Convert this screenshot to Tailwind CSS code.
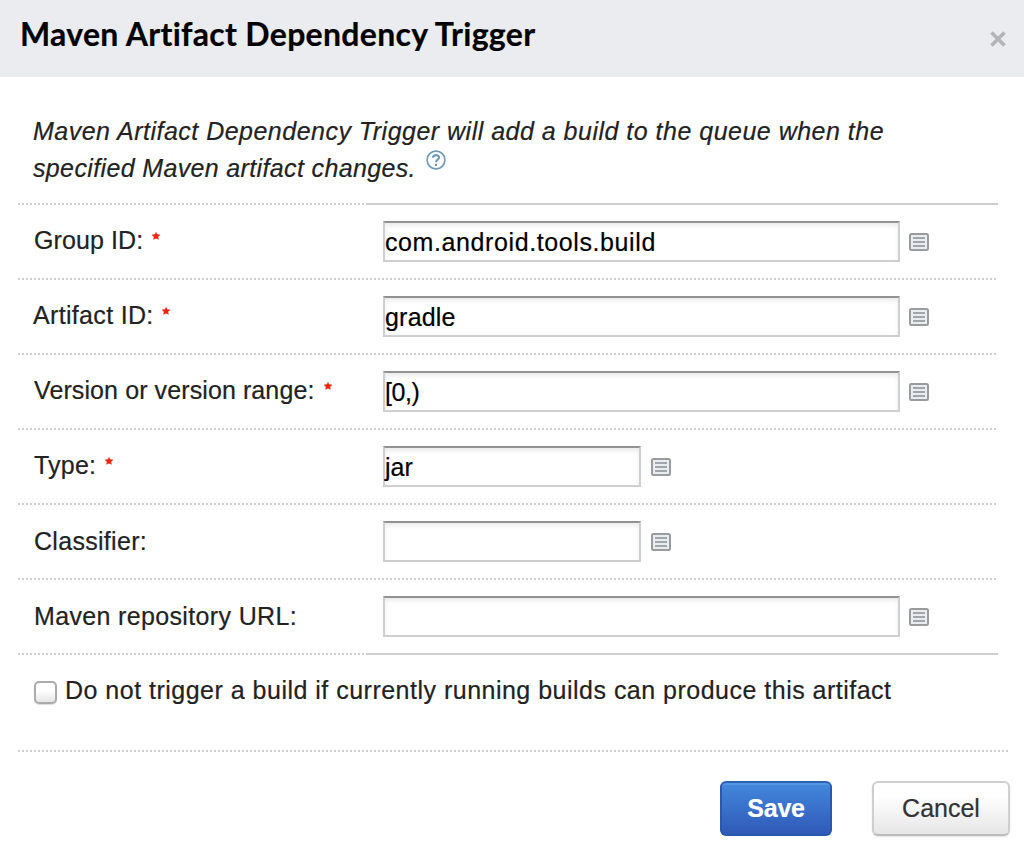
<!DOCTYPE html>
<html lang="en">
<head>
<meta charset="utf-8">
<title>Maven Artifact Dependency Trigger</title>
<script src="https://cdn.jsdelivr.net/npm/@tailwindcss/browser@4"></script>
</head>
<body class="w-[1024px] h-[868px] overflow-hidden bg-white text-[#222] font-['Liberation_Sans',Arial,sans-serif] text-[25px] leading-[37px] whitespace-nowrap [-webkit-text-stroke:0.2px]">
<svg class="hidden">
  <symbol id="list" viewBox="0 0 20 18">
    <rect x="1" y="1" width="18" height="16" rx="1.5" fill="#e9ecf0" stroke="#999b9c" stroke-width="2"/>
    <path d="M4 5h12M4 9h12M4 13h12" stroke="#a2a5a9" stroke-width="1.8"/>
  </symbol>
  <symbol id="star" viewBox="0 0 8 8">
    <path d="M4 .4L5.100 2.500L7.900 2.900L5.900 4.700L6.400 7.300L4 6.200L1.600 7.300L2.100 4.700L.1 2.900L2.900 2.500Z" fill="#f0260c" stroke="#f0260c" stroke-width=".5"/>
  </symbol>
</svg>
<header class="h-[77px] bg-[#ebecf0] flex items-start justify-between pl-[20px] pr-[18px]">
  <h1 class="pt-[15px] font-['Lato',sans-serif] font-bold text-[32px] leading-[37px] tracking-[0.3px] [font-variant-ligatures:none] text-black">Maven Artifact Dependency Trigger</h1>
  <svg class="mt-[31px] w-4 h-4" viewBox="0 0 16 16"><path d="M1.500 1.500l13 13M14.500 1.500l-13 13" stroke="#b5b4b4" stroke-width="3.600"/></svg>
</header>
<main class="pl-[18px]">
  <div class="h-[126px] pt-[36px] pl-[15px] italic">
    <p class="tracking-[0.49px]">Maven Artifact Dependency Trigger will add a build to the queue when the</p>
    <p class="flex items-start tracking-[0.36px]">specified Maven artifact changes.
      <svg class="w-5 h-5 ml-[10px]" viewBox="0 0 20 20" fill="none" stroke="#6f9ab8"><circle cx="10" cy="10" r="8.900" stroke-width="1.700"/><path d="M7 7.700C7.200 4.200 13 4.300 13 7.500C13 9.700 10 9.500 10 12.200M10 13.700v2.200" stroke-width="2.200"/></svg>
    </p>
  </div>
  <div class="w-[980px]">
    <div class="flex h-[75px]">
      <div class="w-[348px] pl-4 bg-[repeating-linear-gradient(90deg,#cfcfcf_0_2px,transparent_2px_4px)] bg-[length:100%_2px] bg-no-repeat pt-[19px] flex items-start tracking-[0.1px]">Group ID:<svg class="w-2 h-2 ml-[9px] mt-[10px]"><use href="#star"/></svg></div>
      <div class="w-[632px] pl-[17px] pt-4 flex items-start border-t-2 border-[#cfcfcf]">
        <div class="w-[517px] h-[41px] border-2 border-[#cfcfcf] border-t-[#929292] shadow-[inset_0_3px_4px_#ececec] text-black tracking-[0.6px] pt-px">com.android.tools.build</div>
        <svg class="w-5 h-[18px] ml-[9px] mt-[12px]"><use href="#list"/></svg>
      </div>
    </div>
    <div class="flex h-[75px] bg-[repeating-linear-gradient(90deg,#cfcfcf_0_2px,transparent_2px_4px)] bg-[length:100%_2px] bg-no-repeat">
      <div class="w-[348px] pl-[15px] pt-[19px] flex items-start tracking-[0.33px]">Artifact ID:<svg class="w-2 h-2 ml-[8px] mt-[10px]"><use href="#star"/></svg></div>
      <div class="pl-[17px] pt-[18px] flex items-start">
        <div class="w-[517px] h-[41px] border-2 border-[#cfcfcf] border-t-[#929292] shadow-[inset_0_3px_4px_#ececec] text-black tracking-[0.2px] pt-px">gradle</div>
        <svg class="w-5 h-[18px] ml-[9px] mt-[12px]"><use href="#list"/></svg>
      </div>
    </div>
    <div class="flex h-[75px] bg-[repeating-linear-gradient(90deg,#cfcfcf_0_2px,transparent_2px_4px)] bg-[length:100%_2px] bg-no-repeat">
      <div class="w-[348px] pl-4 pt-[19px] flex items-start tracking-[0.1px]">Version or version range:<svg class="w-2 h-2 ml-[10px] mt-[10px]"><use href="#star"/></svg></div>
      <div class="pl-[17px] pt-[18px] flex items-start">
        <div class="w-[517px] h-[41px] border-2 border-[#cfcfcf] border-t-[#929292] shadow-[inset_0_3px_4px_#ececec] text-black tracking-[-0.4px] pt-px">[0,)</div>
        <svg class="w-5 h-[18px] ml-[9px] mt-[12px]"><use href="#list"/></svg>
      </div>
    </div>
    <div class="flex h-[75px] bg-[repeating-linear-gradient(90deg,#cfcfcf_0_2px,transparent_2px_4px)] bg-[length:100%_2px] bg-no-repeat">
      <div class="w-[348px] pl-4 pt-[19px] flex items-start tracking-[0.2px]">Type:<svg class="w-2 h-2 ml-[9px] mt-[10px]"><use href="#star"/></svg></div>
      <div class="pl-[17px] pt-[18px] flex items-start">
        <div class="w-[258px] h-[41px] border-2 border-[#cfcfcf] border-t-[#929292] shadow-[inset_0_3px_4px_#ececec] text-black pt-px">jar</div>
        <svg class="w-5 h-[18px] ml-[10px] mt-[12px]"><use href="#list"/></svg>
      </div>
    </div>
    <div class="flex h-[75px] bg-[repeating-linear-gradient(90deg,#cfcfcf_0_2px,transparent_2px_4px)] bg-[length:100%_2px] bg-no-repeat">
      <div class="w-[348px] pl-4 pt-5 tracking-[0.3px]">Classifier:</div>
      <div class="pl-[17px] pt-[18px] flex items-start">
        <div class="w-[258px] h-[41px] border-2 border-[#cfcfcf] border-t-[#929292] shadow-[inset_0_3px_4px_#ececec]"></div>
        <svg class="w-5 h-[18px] ml-[10px] mt-[12px]"><use href="#list"/></svg>
      </div>
    </div>
    <div class="flex h-[75px] bg-[repeating-linear-gradient(90deg,#cfcfcf_0_2px,transparent_2px_4px)] bg-[length:100%_2px] bg-no-repeat">
      <div class="w-[348px] pl-4 pt-5 tracking-[0.35px]">Maven repository URL:</div>
      <div class="pl-[17px] pt-[18px] flex items-start">
        <div class="w-[517px] h-[41px] border-2 border-[#cfcfcf] border-t-[#929292] shadow-[inset_0_3px_4px_#ececec]"></div>
        <svg class="w-5 h-[18px] ml-[9px] mt-[12px]"><use href="#list"/></svg>
      </div>
    </div>
    <div class="flex h-[2px]">
      <div class="w-[348px] bg-[repeating-linear-gradient(90deg,#cfcfcf_0_2px,transparent_2px_4px)]"></div>
      <div class="w-[632px] bg-[#cfcfcf]"></div>
    </div>
  </div>
  <label class="flex h-[95px] pl-4 pt-[17px] tracking-[0.49px]">
    <span class="w-[23px] h-[23px] mt-[9px] mr-[8px] rounded-[5px] border-2 border-[#ababab] bg-linear-to-b from-white from-40% to-[#e6e6e6] shadow-[0_1px_1px_#ddd]"></span>Do not trigger a build if currently running builds can produce this artifact
  </label>
</main>
<footer class="ml-[18px] w-[992px] pt-[31px] flex justify-end gap-[40px] bg-[repeating-linear-gradient(90deg,#cfcfcf_0_2px,transparent_2px_4px)] bg-[length:100%_2px] bg-no-repeat">
  <button class="w-[112px] h-[55px] rounded-[6px] border-2 border-[#2a58ae] border-t-[#2d63b5] bg-linear-to-b from-[#4388dc] to-[#3059b8] shadow-[inset_0_2px_0_#5695e0] text-white font-bold tracking-[-0.2px] pb-px">Save</button>
  <button class="w-[138px] h-[55px] rounded-[6px] border-2 border-[#cfcfcf] border-b-[#bcbcbc] bg-linear-to-b from-white from-25% to-[#e6e6e6] shadow-[0_1px_2px_#e4e4e4] text-[#333] pb-px">Cancel</button>
</footer>
</body>
</html>
